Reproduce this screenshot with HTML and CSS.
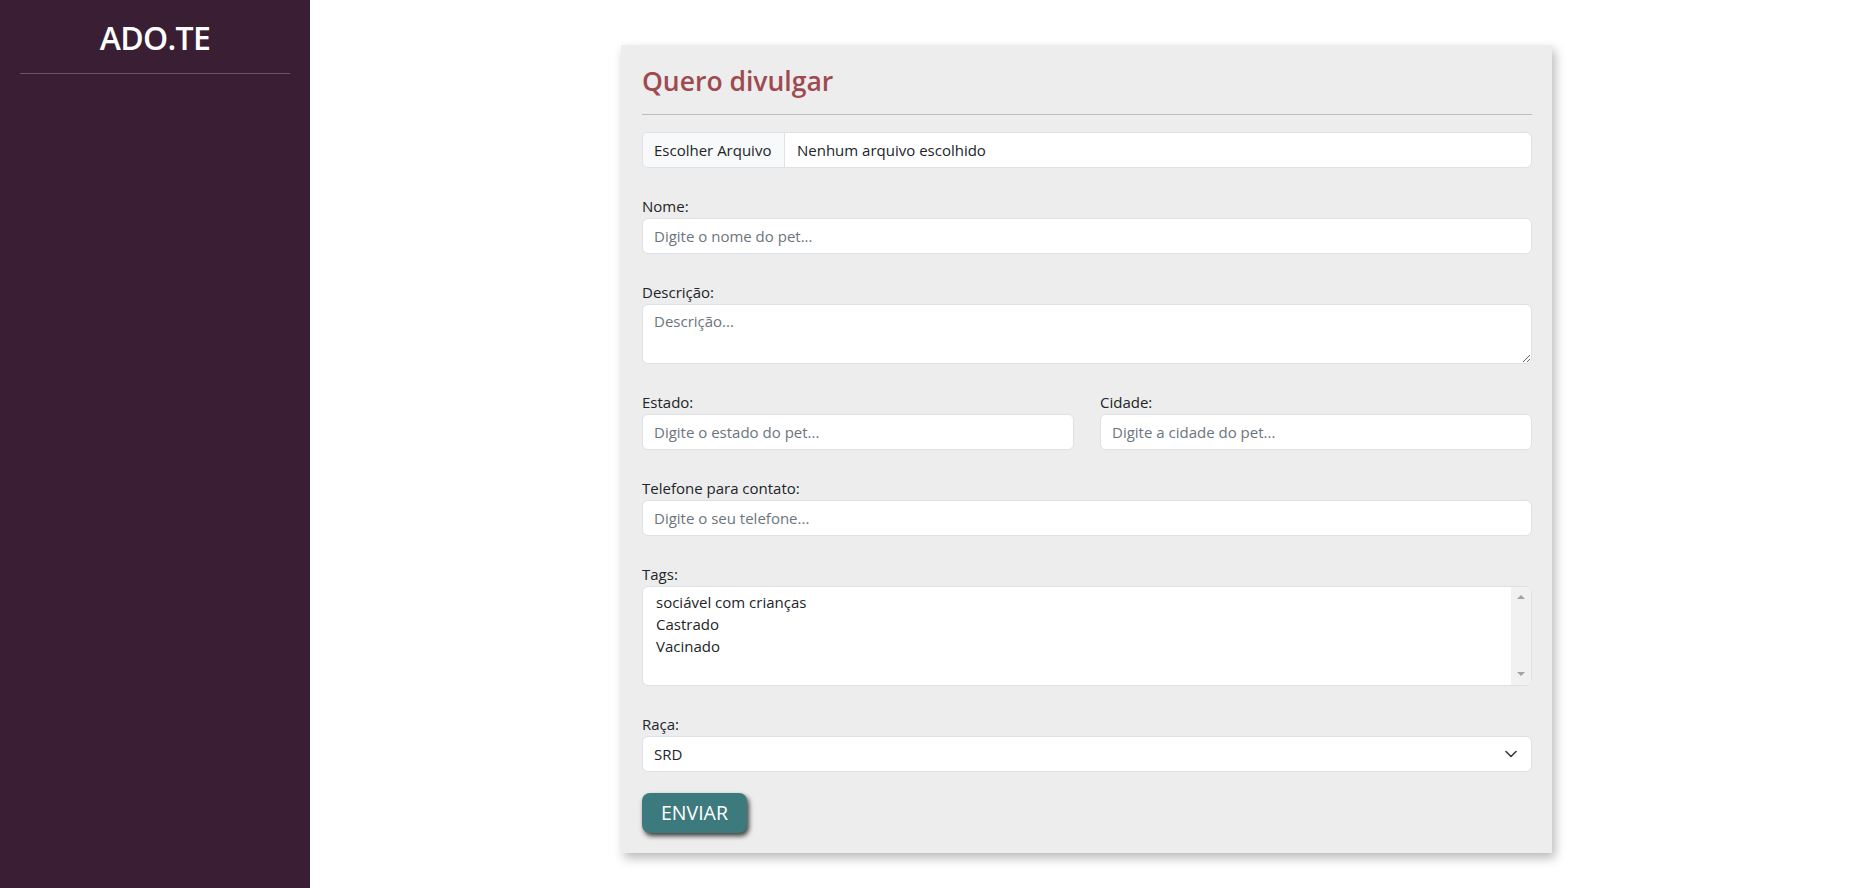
FILE: index.html
```html
<!DOCTYPE html>
<html lang="pt-BR">
<head>
<meta charset="utf-8">
<title>ADO.TE - Quero divulgar</title>
<link rel="stylesheet" href="styles.css">
</head>
<body>
<aside class="sidebar">
  <h1 class="brand">ADO.TE</h1>
  <hr class="brand-rule">
</aside>
<main class="main">
  <form class="card">
    <h2 class="card-title">Quero divulgar</h2>
    <hr class="title-rule">
    <div class="file-input">
      <span class="file-btn">Escolher Arquivo</span>
      <span class="file-name">Nenhum arquivo escolhido</span>
    </div>
    <div class="group">
      <label class="label" for="nome">Nome:</label>
      <input class="control" id="nome" type="text" placeholder="Digite o nome do pet...">
    </div>
    <div class="group">
      <label class="label" for="desc">Descrição:</label>
      <textarea class="control textarea" id="desc" placeholder="Descrição..."></textarea>
    </div>
    <div class="group row">
      <div class="col">
        <label class="label" for="estado">Estado:</label>
        <input class="control" id="estado" type="text" placeholder="Digite o estado do pet...">
      </div>
      <div class="col">
        <label class="label" for="cidade">Cidade:</label>
        <input class="control" id="cidade" type="text" placeholder="Digite a cidade do pet...">
      </div>
    </div>
    <div class="group">
      <label class="label" for="tel">Telefone para contato:</label>
      <input class="control" id="tel" type="text" placeholder="Digite o seu telefone...">
    </div>
    <div class="group">
      <span class="label">Tags:</span>
      <div class="listbox">
        <div class="options">
          <div class="option">sociável com crianças</div>
          <div class="option">Castrado</div>
          <div class="option">Vacinado</div>
        </div>
        <div class="scrollbar">
          <span class="arrow up"></span>
          <span class="arrow down"></span>
        </div>
      </div>
    </div>
    <div class="group">
      <span class="label">Raça:</span>
      <div class="select">
        <span>SRD</span>
        <svg class="chevron" width="12" height="8" viewBox="0 0 12 8"><path d="M1 1.5l5 5 5-5" fill="none" stroke="#343a40" stroke-width="1.6" stroke-linecap="round" stroke-linejoin="round"/></svg>
      </div>
    </div>
    <button class="submit" type="button">ENVIAR</button>
  </form>
</main>
</body>
</html>
```

FILE: styles.css
```css
* { box-sizing: border-box; }
html, body { margin: 0; height: 100%; }
body {
  display: flex;
  font-family: "Open Sans", "Noto Sans", sans-serif;
  font-size: 15px;
  color: #212529;
  background: #ffffff;
  overflow: hidden;
}
.sidebar {
  width: 310px;
  flex: 0 0 310px;
  background: #3a1e34;
  padding: 18px 20px 0;
}
.brand {
  margin: 0;
  text-align: center;
  color: #ffffff;
  font-size: 32px;
  font-weight: 600;
  line-height: 40.8px;
  letter-spacing: -0.7px;
}
.brand-rule {
  margin: 14px 0 0;
  border: 0;
  height: 1px;
  background: rgba(255,255,255,0.25);
}
.main {
  flex: 1;
  padding: 45px 0 0 6px;
  display: flex;
  justify-content: center;
  align-items: flex-start;
}
.card {
  width: 931px;
  background: #ededed;
  padding: 20px 20px 20px 21px;
  box-shadow: 3px 5px 10px rgba(0,0,0,0.28);
}
.card-title {
  margin: 0;
  font-size: 26.5px;
  font-weight: 600;
  line-height: 33.6px;
  color: #9e4a50;
}
.title-rule {
  margin: 15px 0 17px;
  border: 0;
  height: 1px;
  background: #bcbcbc;
}
.file-input {
  display: flex;
  height: 36.5px;
  background: #fff;
  border: 1px solid #dee2e6;
  border-radius: 6px;
  overflow: hidden;
  line-height: 22.5px;
}
.file-btn {
  display: flex;
  align-items: center;
  padding: 0 11px 0 11px;
  width: 142px;
  background: #f8f9fa;
  border-right: 1px solid #dee2e6;
  white-space: nowrap;
}
.file-name {
  display: flex;
  align-items: center;
  padding-left: 12px;
}
.group { margin-top: 27px; }
.row {
  display: grid;
  grid-template-columns: 1fr 1fr;
  column-gap: 26px;
}
.label {
  display: block;
  line-height: 22.5px;
}
.control {
  display: block;
  width: 100%;
  height: 36.5px;
  padding: 0 11px;
  font-family: inherit;
  font-size: 15px;
  color: #212529;
  background: #fff;
  border: 1px solid #dee2e6;
  border-radius: 6px;
  outline: none;
}
.control::placeholder { color: #6c757d; opacity: 1; }
.textarea {
  height: 60.5px;
  padding: 5px 11px;
  line-height: 22.5px;
  resize: vertical;
}
.listbox {
  display: flex;
  height: 100.5px;
  background: #fff;
  border: 1px solid #dee2e6;
  border-radius: 6px;
  overflow: hidden;
}
.options {
  flex: 1;
  padding: 5.6px 11px;
}
.option {
  padding: 0 2px;
  line-height: 21.8px;
}
.scrollbar {
  width: 20px;
  background: #f1f1f1;
  display: flex;
  flex-direction: column;
  justify-content: space-between;
  align-items: center;
  padding: 8px 0 9px;
}
.arrow {
  width: 0;
  height: 0;
  border-left: 4.5px solid transparent;
  border-right: 4.5px solid transparent;
}
.arrow.up { border-bottom: 4.5px solid #a3a3a3; }
.arrow.down { border-top: 4.5px solid #a3a3a3; }
.select {
  display: flex;
  align-items: center;
  justify-content: space-between;
  height: 36.5px;
  padding: 0 14px 0 11px;
  background: #fff;
  border: 1px solid #dee2e6;
  border-radius: 6px;
}
.chevron { display: block; }
.submit {
  display: block;
  margin-top: 21px;
  height: 39.5px;
  padding: 0 19px;
  background: #3d7a7d;
  color: #fff;
  border: 0;
  border-radius: 8px;
  font-family: inherit;
  font-size: 19.5px;
  box-shadow: 2px 3px 5px rgba(0,0,0,0.75);
}
```
